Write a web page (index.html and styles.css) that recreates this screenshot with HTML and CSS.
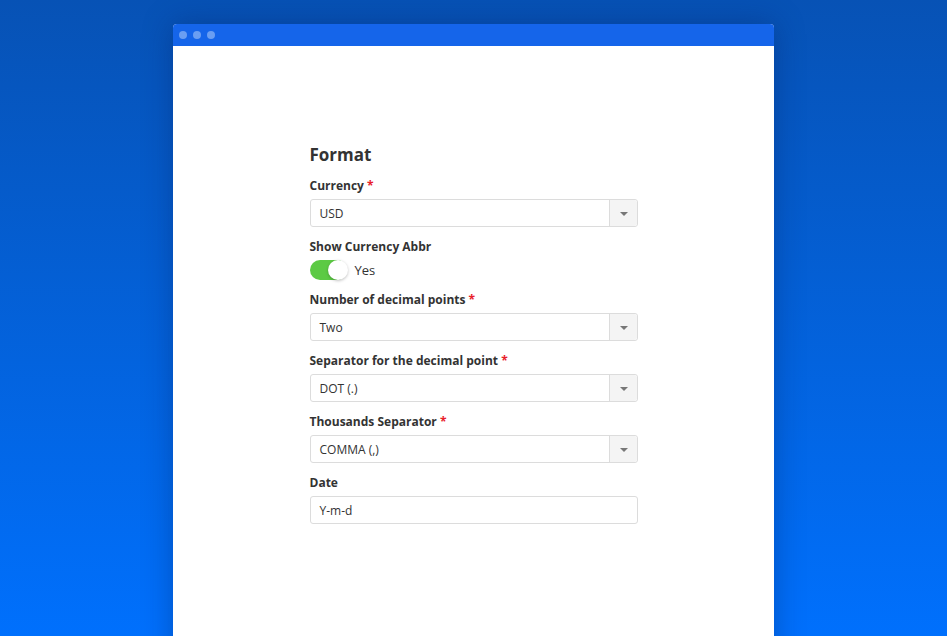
FILE: index.html
```html
<!DOCTYPE html>
<html>
<head>
    <title>Format</title>
    <meta name="viewport" content="width=device-width, initial-scale=1.0">
    <link rel="stylesheet" href="styles.css">
</head>
<body>
    <div class="window">
        <div class="titlebar">
            <span class="dot"></span>
            <span class="dot"></span>
            <span class="dot"></span>
        </div>
        <div class="content">
            <form class="format-form">
                <h2>Format</h2>

                <div class="field">
                    <label>Currency <span class="req">*</span></label>
                    <div class="select"><span class="value">USD</span><span class="arrow"></span></div>
                </div>

                <div class="field">
                    <label>Show Currency Abbr</label>
                    <div class="toggle-row">
                        <span class="toggle"><span class="knob"></span></span>
                        <span class="toggle-text">Yes</span>
                    </div>
                </div>

                <div class="field">
                    <label>Number of decimal points <span class="req">*</span></label>
                    <div class="select"><span class="value">Two</span><span class="arrow"></span></div>
                </div>

                <div class="field">
                    <label>Separator for the decimal point <span class="req">*</span></label>
                    <div class="select"><span class="value">DOT (.)</span><span class="arrow"></span></div>
                </div>

                <div class="field">
                    <label>Thousands Separator <span class="req">*</span></label>
                    <div class="select"><span class="value">COMMA (,)</span><span class="arrow"></span></div>
                </div>

                <div class="field">
                    <label>Date</label>
                    <div class="input"><span class="value">Y-m-d</span></div>
                </div>
            </form>
        </div>
    </div>
</body>
</html>
```
FILE: styles.css
```css
html, body {height: 100%;}
body {margin: 0; padding-top: 24px; box-sizing: border-box; overflow: hidden; background: linear-gradient(to bottom, #0752b5 0%, #0070fd 100%); font-family: "Open Sans", "Liberation Sans", sans-serif; color: #333;}
.window {width: 601px; height: 640px; margin: 0 auto; background: #fff; border-radius: 4px 4px 0 0; overflow: hidden; box-shadow: 0 0 30px rgba(0, 30, 90, 0.35);}
.titlebar {height: 22px; background: #1565ea; display: flex; align-items: center; gap: 6px; padding-left: 6px;}
.dot {width: 8px; height: 8px; border-radius: 50%; background: #6a9ef2;}
.content {padding-top: 98px;}
.format-form {width: 328px; margin: 0 auto;}
h2 {margin: 0 0 12px; font-size: 17px; line-height: 22px; font-weight: 700; color: #333;}
.field {margin-bottom: 12px;}
label {display: block; font-size: 12px; line-height: 16px; font-weight: 700; color: #333; margin-bottom: 5px;}
.req {color: #e8202a;}
.select, .input {display: flex; height: 28px; box-sizing: border-box; border: 1px solid #dcdcdc; border-radius: 3px; font-size: 12px; color: #333;}
.value {flex: 1; display: flex; align-items: center; padding-left: 9px;}
.arrow {width: 27px; background: #f4f4f4; border-left: 1px solid #dcdcdc; position: relative; border-radius: 0 3px 3px 0;}
.arrow::after {content: ""; position: absolute; left: 10px; top: 12px; border-left: 4px solid transparent; border-right: 4px solid transparent; border-top: 4px solid #777;}
.toggle-row {display: flex; align-items: center; gap: 8px;}
.toggle {width: 37px; height: 20px; border-radius: 10px; background: #5cca44; position: relative;}
.knob {position: absolute; right: -1px; top: 0; width: 20px; height: 20px; border-radius: 50%; background: #fff; box-shadow: 0 1px 3px rgba(0, 0, 0, 0.25);}
.toggle-text {font-size: 13px; color: #333;}
```
